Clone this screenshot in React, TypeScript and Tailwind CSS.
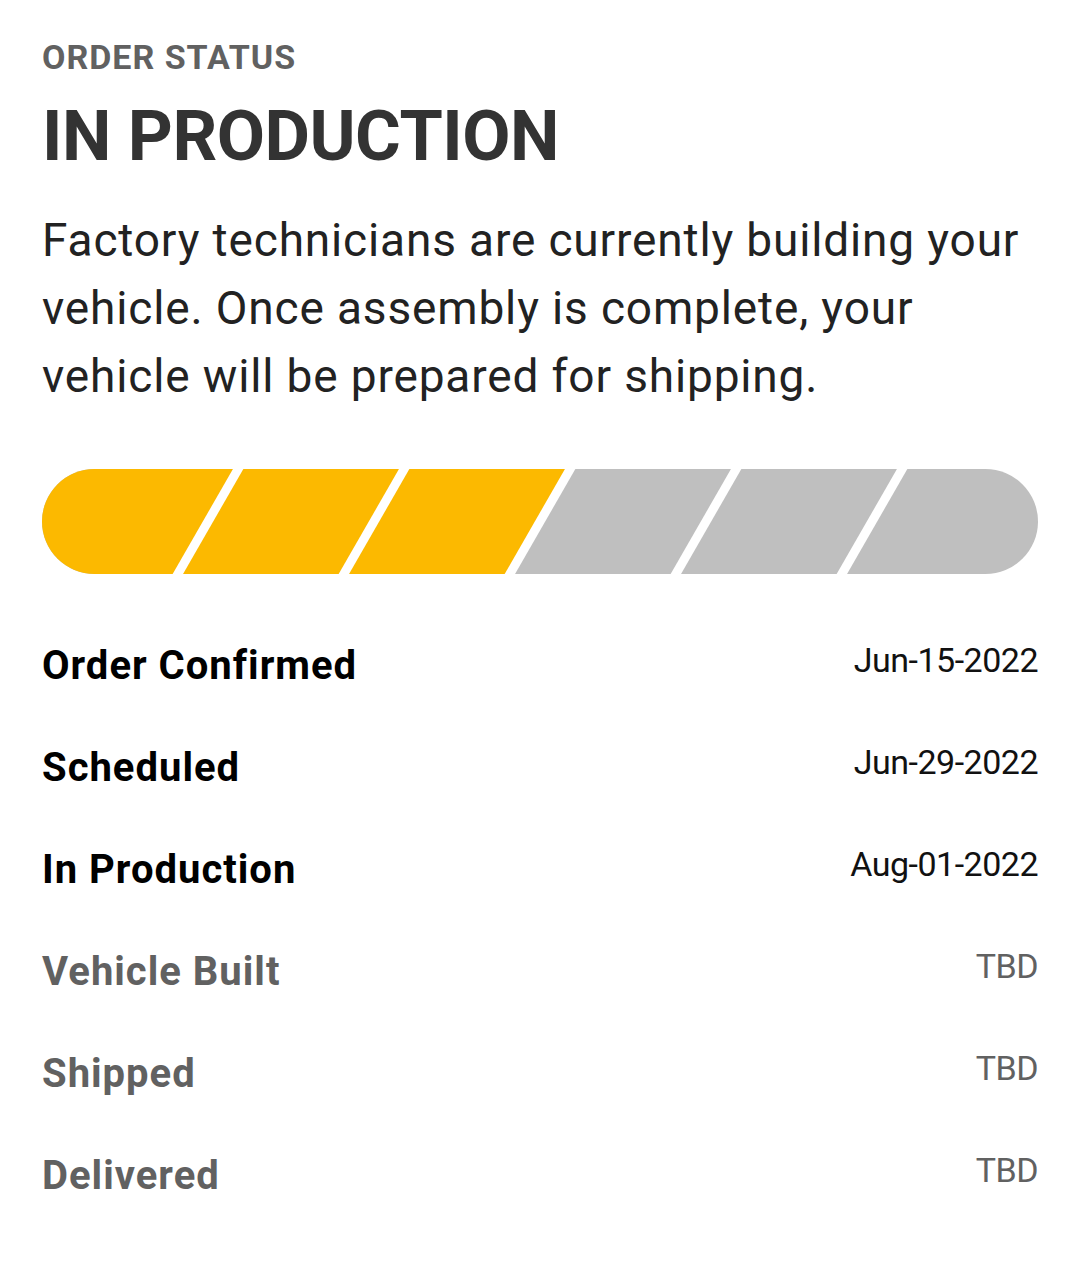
import React from "react";

const rows = [
  { label: "Order Confirmed", date: "Jun-15-2022", done: true },
  { label: "Scheduled", date: "Jun-29-2022", done: true },
  { label: "In Production", date: "Aug-01-2022", done: true },
  { label: "Vehicle Built", date: "TBD", done: false },
  { label: "Shipped", date: "TBD", done: false },
  { label: "Delivered", date: "TBD", done: false },
];

function ProgressBar() {
  const W = 995;
  const H = 105;
  const seg = W / 6;
  const s = 30;
  const done = 3;
  const b = seg * done;
  return (
    <div className="h-[105px] w-full overflow-hidden rounded-full">
      <svg width="100%" height="105" viewBox={`0 0 ${W} ${H}`} preserveAspectRatio="none">
        <rect x="0" y="0" width={W} height={H} fill="#BFBFBF" />
        <polygon points={`0,0 ${b + s},0 ${b - s},${H} 0,${H}`} fill="#FCB900" />
        {[1, 2, 3, 4, 5].map((k) => {
          const x = seg * k;
          return (
            <line
              key={k}
              x1={x + s + 3}
              y1={-5}
              x2={x - s - 3}
              y2={H + 5}
              stroke="#ffffff"
              strokeWidth="9"
            />
          );
        })}
      </svg>
    </div>
  );
}

export default function App() {
  return (
    <div
      className="min-h-[1272px] w-[1080px] bg-white px-[42px] pt-[37px]"
      style={{ fontFamily: "Roboto, 'Noto Sans', sans-serif" }}
    >
      <div className="text-[34px] font-bold leading-[40px] tracking-[1px] text-[#616161]">ORDER STATUS</div>
      <div className="mt-[24px] text-[70px] font-bold leading-[70px] tracking-[-0.5px] text-[#333333]">
        IN PRODUCTION
      </div>
      <p className="mt-[35px] text-[46px] leading-[68px] tracking-[0.85px] text-[#222222]">
        Factory technicians are currently building your vehicle. Once assembly is complete, your
        vehicle will be prepared for shipping.
      </p>
      <div className="mt-[59px]">
        <ProgressBar />
      </div>
      <div className="mt-[68px] flex flex-col gap-[54px]">
        {rows.map((r) => (
          <div key={r.label} className="flex h-[48px] items-start justify-between">
            <div
              className={`text-[40px] font-bold leading-[48px] tracking-[1px] ${
                r.done ? "text-black" : "text-[#616161]"
              }`}
            >
              {r.label}
            </div>
            <div
              className={`text-[34px] leading-[36px] tracking-[-0.5px] ${
                r.done ? "text-[#111111]" : "text-[#616161]"
              }`}
            >
              {r.date}
            </div>
          </div>
        ))}
      </div>
    </div>
  );
}
